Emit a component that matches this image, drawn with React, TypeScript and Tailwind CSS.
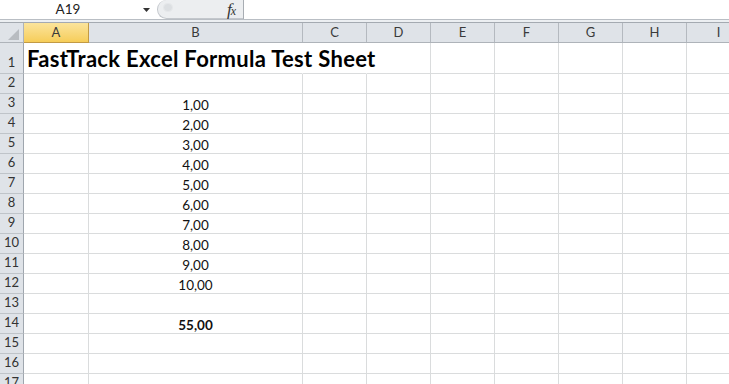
const cols = ['A', 'B', 'C', 'D', 'E', 'F', 'G', 'H', 'I']

const widths: Record<string, string> = {
  A: 'w-[65px]',
  B: 'w-[214px]',
  C: 'w-[64px]',
  D: 'w-[64px]',
  E: 'w-[64px]',
  F: 'w-[64px]',
  G: 'w-[64px]',
  H: 'w-[64px]',
  I: 'w-[64px]',
}

const values: Record<number, string> = {
  3: '1,00',
  4: '2,00',
  5: '3,00',
  6: '4,00',
  7: '5,00',
  8: '6,00',
  9: '7,00',
  10: '8,00',
  11: '9,00',
  12: '10,00',
  14: '55,00',
}

function FormulaBar() {
  return (
    <div className="flex h-[20px] bg-white border-b border-[#b9bec4]">
      {/* name box */}
      <div className="relative w-[157px] shrink-0 flex items-center">
        <span className="w-[136px] text-center text-[13.5px] text-[#222]">A19</span>
        <svg className="absolute left-[143px] top-[8px]" width="7" height="4" viewBox="0 0 7 4">
          <path d="M0 0h7L3.5 4z" fill="#333" />
        </svg>
      </div>
      {/* splitter + fx */}
      <div className="relative w-[86px] shrink-0 h-[19px] bg-[#eceef0] rounded-l-[10px] border-l border-b border-[#c3c7cc] flex items-center justify-end pr-[8px]">
        <span className="absolute left-[5px] top-[3px] w-[10px] h-[9px] rounded-full bg-[#dcdfe2] border border-[#e6e8ea]" />
        <span className="font-['Liberation_Serif',serif] italic text-[17px] leading-none text-[#333] tracking-[-1px]">
          f<span className="text-[12px]">x</span>
        </span>
      </div>
      <div className="flex-1 border-l border-[#a8adb3]" />
    </div>
  )
}

function HeaderRow() {
  return (
    <div className="flex h-[21px] border-t border-[#a4aab1] border-b border-b-[#aeb3b9] bg-[#dfe3e8]">
      <div className="relative w-[24px] shrink-0 border-r border-[#aeb3b9]">
        <svg className="absolute left-[8px] top-[6px]" width="11" height="11" viewBox="0 0 11 11">
          <path d="M11 0V11H0z" fill="#b8bcc1" />
        </svg>
      </div>
      {cols.map((c) =>
        c === 'A' ? (
          <div
            key={c}
            className={`${widths[c]} shrink-0 -mb-px flex items-center justify-center bg-gradient-to-b from-[#fbe49b] to-[#f6cd58] border-r border-b border-[#c29a45] text-[13px] text-[#3a3a3a]`}
          >
            {c}
          </div>
        ) : (
          <div
            key={c}
            className={`${widths[c]} shrink-0 flex items-center justify-center border-r border-[#b4b9bf] text-[13px] text-[#3a3a3a]`}
          >
            {c}
          </div>
        )
      )}
    </div>
  )
}

function Row({ n }: { n: number }) {
  const tall = n === 1
  return (
    <div className={`flex ${tall ? 'h-[31px]' : 'h-[20px]'}`}>
      <div className="w-[24px] shrink-0 flex items-end justify-center pb-[1px] bg-[#dfe3e8] border-r border-r-[#9fa6ae] border-b border-b-[#bfc4c9] text-[13px] text-[#333]">
        {n}
      </div>
      {cols.map((c) => {
        if (n === 1 && c === 'A') {
          return (
            <div key={c} className={`${widths[c]} shrink-0 relative border-r border-r-transparent border-b border-b-[#dadcdd]`}>
              <span className="absolute left-[3px] bottom-[3px] whitespace-nowrap font-bold text-[22px] tracking-[0.3px] leading-none text-black z-10">
                FastTrack Excel Formula Test Sheet
              </span>
            </div>
          )
        }
        const v = c === 'B' ? values[n] : undefined
        const hideBorder = n === 1 && (c === 'B' || c === 'C')
        return (
          <div
            key={c}
            className={`${widths[c]} shrink-0 flex items-end justify-center pb-[1px] border-b border-[#dadcdd] text-[13.5px] leading-none ${hideBorder ? 'border-r border-r-transparent' : 'border-r'} ${n === 14 ? 'font-bold' : ''}`}
          >
            {v}
          </div>
        )
      })}
    </div>
  )
}

export default function App() {
  const rows = Array.from({ length: 17 }, (_, i) => i + 1)
  return (
    <div className="w-[729px] h-[384px] overflow-hidden bg-white font-[Lato,sans-serif] text-[#111]">
      <FormulaBar />
      <div className="h-[2px] bg-[#eceff2]" />
      <HeaderRow />
      {rows.map((n) => (
        <Row key={n} n={n} />
      ))}
    </div>
  )
}
